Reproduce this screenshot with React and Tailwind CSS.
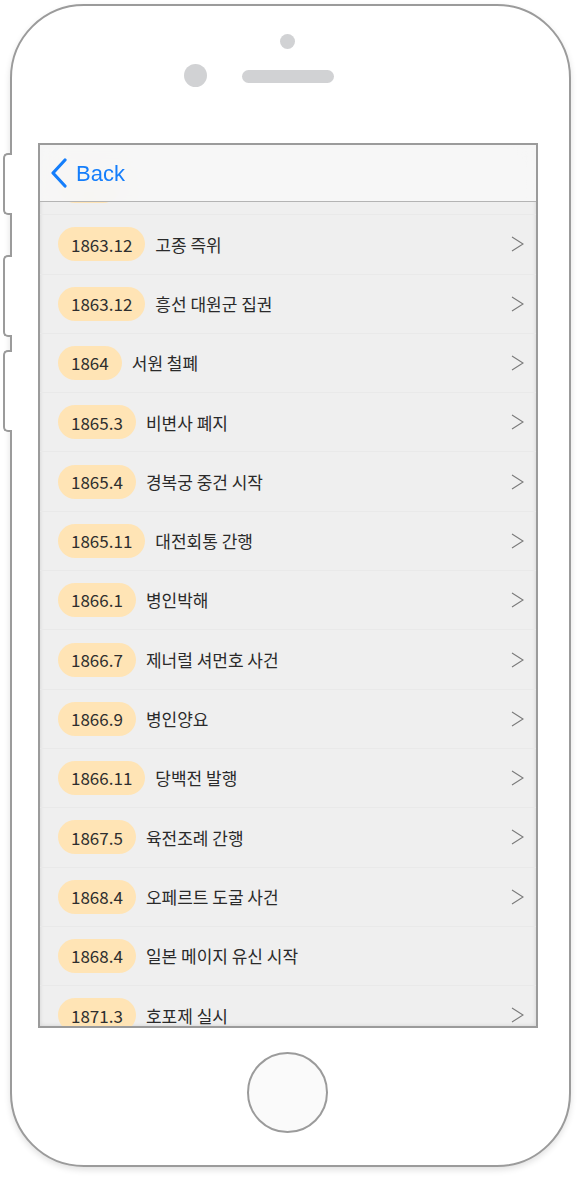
import React from "react";

const events = [
  { date: "1863.12", title: "고종 즉위", arrow: true },
  { date: "1863.12", title: "흥선 대원군 집권", arrow: true },
  { date: "1864", title: "서원 철폐", arrow: true },
  { date: "1865.3", title: "비변사 폐지", arrow: true },
  { date: "1865.4", title: "경복궁 중건 시작", arrow: true },
  { date: "1865.11", title: "대전회통 간행", arrow: true },
  { date: "1866.1", title: "병인박해", arrow: true },
  { date: "1866.7", title: "제너럴 셔먼호 사건", arrow: true },
  { date: "1866.9", title: "병인양요", arrow: true },
  { date: "1866.11", title: "당백전 발행", arrow: true },
  { date: "1867.5", title: "육전조례 간행", arrow: true },
  { date: "1868.4", title: "오페르트 도굴 사건", arrow: true },
  { date: "1868.4", title: "일본 메이지 유신 시작", arrow: false },
  { date: "1871.3", title: "호포제 실시", arrow: true },
];

const Chevron = () => (
  <svg width="13" height="16" viewBox="0 0 13 16" className="shrink-0">
    <polyline
      points="1,1 12,8 1,15"
      fill="none"
      stroke="#7a7a7a"
      strokeWidth="1.1"
    />
  </svg>
);

const EventRow = ({ event }) => (
  <div className="flex h-[59.3px] shrink-0 items-center border-b border-[#e9e9e9] pl-[18px] pr-[12px]">
    <span className="flex h-[34px] items-center rounded-full bg-[#ffe4b5] px-[13px] text-[17px] text-[#2e2e2e]">
      {event.date}
    </span>
    <span className="ml-[10px] flex-1 text-[17px] text-[#2a2a2a]">
      {event.title}
    </span>
    {event.arrow && <Chevron />}
  </div>
);

const SideButton = ({ className }) => (
  <div
    className={`absolute left-[-9px] w-[9px] rounded-l-[5px] border-2 border-r-0 border-[#9b9b9b] bg-white ${className}`}
  />
);

export default function App() {
  return (
    <div
      className="min-h-[1179px] w-[580px] bg-white pt-[4px]"
      style={{ fontFamily: '"Noto Sans CJK KR", "Noto Sans", sans-serif' }}
    >
      {/* phone body */}
      <div className="relative ml-[10px] flex h-[1163px] w-[561px] flex-col rounded-[74px] border-2 border-[#9b9b9b] bg-white shadow-[0_3px_6px_rgba(0,0,0,0.12)]">
        <SideButton className="top-[147px] h-[62px]" />
        <SideButton className="top-[249px] h-[82px]" />
        <SideButton className="top-[344px] h-[82px]" />

        {/* top bezel */}
        <div className="relative h-[137px] shrink-0">
          <div className="absolute left-[268px] top-[28px] h-[15px] w-[15px] rounded-full bg-[#d1d2d4]" />
          <div className="absolute left-[172px] top-[58px] h-[23px] w-[23px] rounded-full bg-[#d1d2d4]" />
          <div className="absolute left-[230px] top-[64px] h-[13px] w-[92px] rounded-full bg-[#d1d2d4]" />
        </div>

        {/* screen */}
        <div className="relative ml-[26px] h-[885px] w-[500px] shrink-0 overflow-hidden border-2 border-[#9b9b9b] bg-[#efefef] shadow-[inset_0_0_4px_rgba(0,0,0,0.12)]">
          <div className="flex flex-col pt-[11px]">
            {/* row scrolled under the nav bar, only its pill peeks out */}
            <div className="flex h-[59.3px] shrink-0 items-center border-b border-[#e9e9e9] pl-[18px]">
              <span className="h-[34px] w-[62px] translate-y-[1px] rounded-full bg-[#ffe4b5]" />
            </div>
            {events.map((event, i) => (
              <EventRow key={i} event={event} />
            ))}
          </div>

          {/* nav bar over the list */}
          <div className="absolute inset-x-0 top-0 flex h-[57px] items-center border-b border-[#b4b4b4] bg-[#f7f7f7]/95 pl-[9px] backdrop-blur-md">
            <svg width="20" height="30" viewBox="0 0 20 30">
              <polyline
                points="16,2 4,15 16,28"
                fill="none"
                stroke="#157efb"
                strokeWidth="3.2"
                strokeLinecap="round"
                strokeLinejoin="round"
              />
            </svg>
            <span
              className="ml-[7px] text-[22px] text-[#157efb]"
              style={{ fontFamily: '"Liberation Sans", Arial, sans-serif' }}
            >
              Back
            </span>
          </div>
        </div>

        {/* home button */}
        <div className="flex flex-1 items-start pl-[235px] pt-[24px]">
          <div className="h-[81px] w-[81px] rounded-full border-2 border-[#9b9b9b] bg-[#fafafa]" />
        </div>
      </div>
    </div>
  );
}
